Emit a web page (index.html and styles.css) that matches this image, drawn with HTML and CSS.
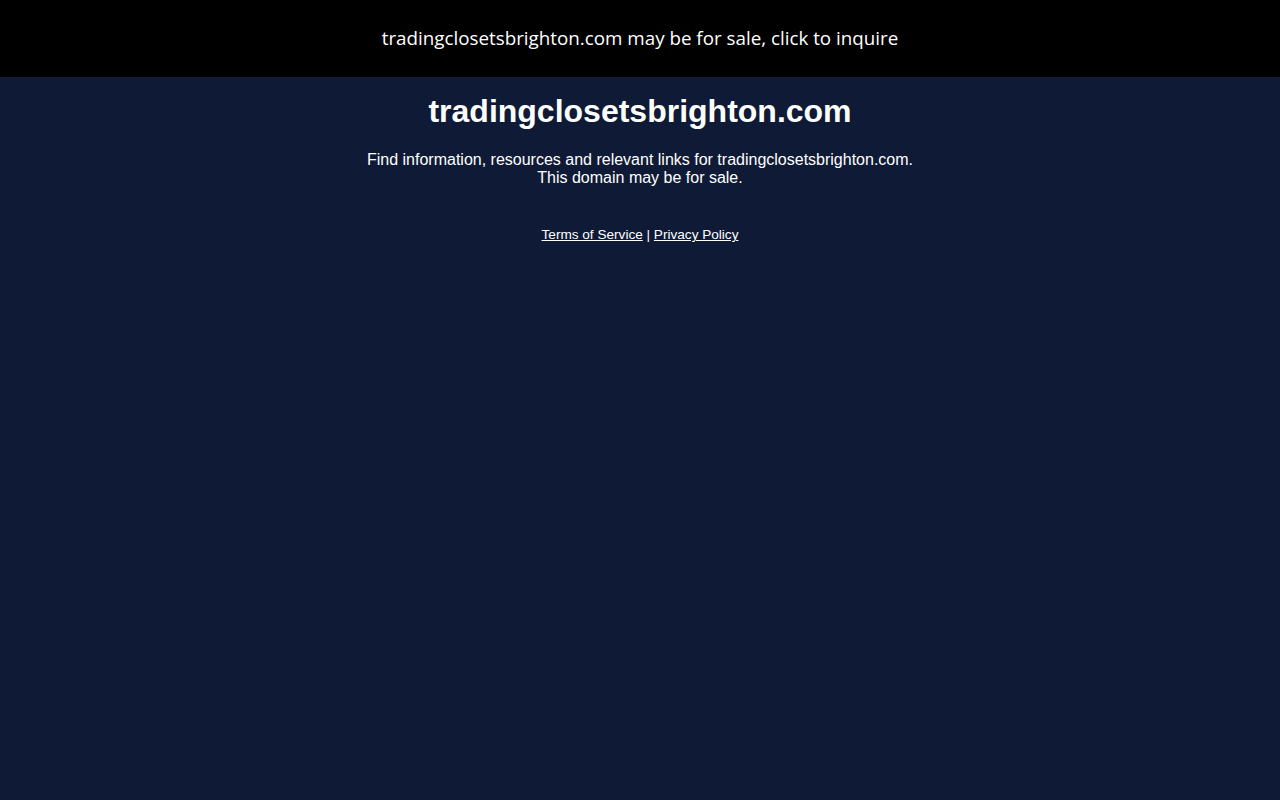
FILE: index.html
```html
<!DOCTYPE html>
<html>
<head>
<meta charset="utf-8">
<link rel="stylesheet" href="styles.css">
</head>
<body>
<div class="topbar"><a class="sale" href="#">tradingclosetsbrighton.com may be for sale, click to inquire</a></div>
<main class="content">
<h1 class="title">tradingclosetsbrighton.com</h1>
<p class="desc">Find information, resources and relevant links for tradingclosetsbrighton.com.<br>This domain may be for sale.</p>
<div class="footer"><a href="#">Terms of Service</a> | <a href="#">Privacy Policy</a></div>
</main>
</body>
</html>
```
FILE: styles.css
```css
html, body { margin: 0; padding: 0; }
body { background: #0f1b36; color: #fff; font-family: "Liberation Sans", Arial, sans-serif; min-height: 800px; }
.topbar { background: #000; height: 77px; display: flex; align-items: center; justify-content: center; }
.sale { color: #fff; text-decoration: none; font-family: "Open Sans", sans-serif; font-size: 18.8px; line-height: 24px; margin-top: -2px; }
.content { text-align: center; }
.title { margin: 16px 0 0; font-size: 32px; font-weight: bold; line-height: 37px; }
.desc { margin: 21px 0 0; font-size: 16px; line-height: 18px; }
.footer { margin-top: 40px; font-size: 13.6px; line-height: 15px; }
.footer a { color: #fff; }
```
